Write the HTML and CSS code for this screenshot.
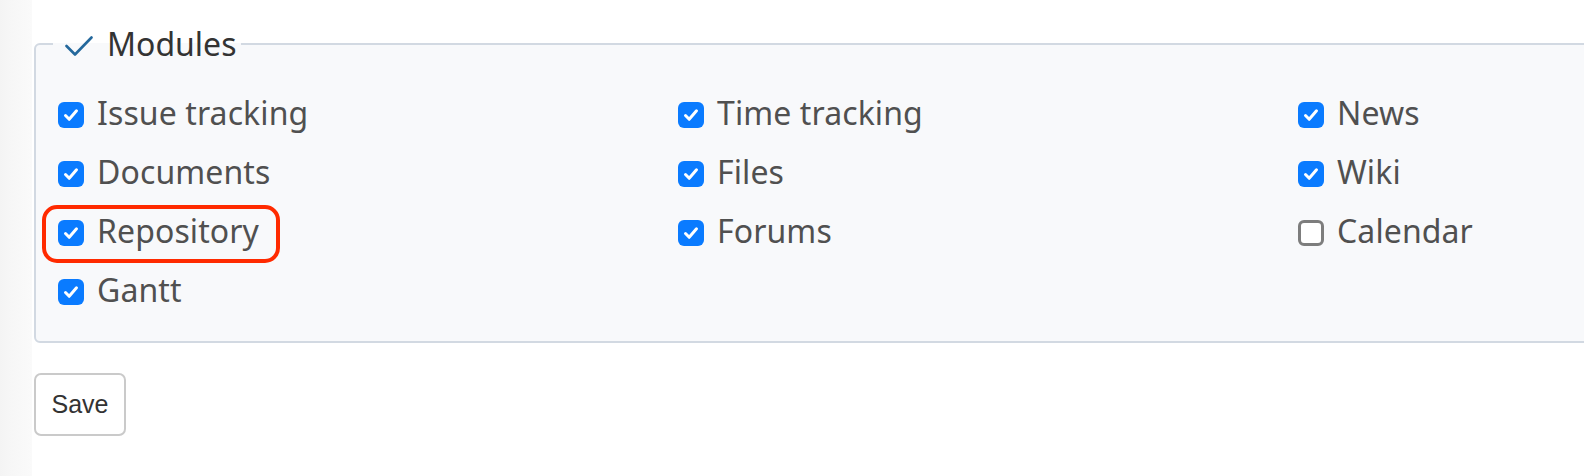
FILE: index.html
```html
<!DOCTYPE html>
<html>
<head>
<meta charset="utf-8">
<link rel="stylesheet" href="styles.css">
</head>
<body>
<div class="page">
  <div class="sidebar"></div>
  <div class="content">
    <fieldset class="modules">
      <legend class="legend">
        <svg class="legend-icon" width="28" height="20" viewBox="0 0 28 20"><polyline points="1.5,10 10,18.5 26.5,1.5" fill="none" stroke="#24689c" stroke-width="2.6" stroke-linecap="round" stroke-linejoin="round"/></svg>
        <span>Modules</span>
      </legend>
      <div class="grid">
        <label class="item"><span class="cb on"><svg width="26" height="26" viewBox="0 0 26 26"><polyline points="7.5,13.5 11.2,17.3 18.5,8.8" fill="none" stroke="#fff" stroke-width="3" stroke-linecap="round" stroke-linejoin="round"/></svg></span>Issue tracking</label>
        <label class="item"><span class="cb on"><svg width="26" height="26" viewBox="0 0 26 26"><polyline points="7.5,13.5 11.2,17.3 18.5,8.8" fill="none" stroke="#fff" stroke-width="3" stroke-linecap="round" stroke-linejoin="round"/></svg></span>Time tracking</label>
        <label class="item"><span class="cb on"><svg width="26" height="26" viewBox="0 0 26 26"><polyline points="7.5,13.5 11.2,17.3 18.5,8.8" fill="none" stroke="#fff" stroke-width="3" stroke-linecap="round" stroke-linejoin="round"/></svg></span>News</label>
        <label class="item"><span class="cb on"><svg width="26" height="26" viewBox="0 0 26 26"><polyline points="7.5,13.5 11.2,17.3 18.5,8.8" fill="none" stroke="#fff" stroke-width="3" stroke-linecap="round" stroke-linejoin="round"/></svg></span>Documents</label>
        <label class="item"><span class="cb on"><svg width="26" height="26" viewBox="0 0 26 26"><polyline points="7.5,13.5 11.2,17.3 18.5,8.8" fill="none" stroke="#fff" stroke-width="3" stroke-linecap="round" stroke-linejoin="round"/></svg></span>Files</label>
        <label class="item"><span class="cb on"><svg width="26" height="26" viewBox="0 0 26 26"><polyline points="7.5,13.5 11.2,17.3 18.5,8.8" fill="none" stroke="#fff" stroke-width="3" stroke-linecap="round" stroke-linejoin="round"/></svg></span>Wiki</label>
        <label class="item highlighted"><span class="cb on"><svg width="26" height="26" viewBox="0 0 26 26"><polyline points="7.5,13.5 11.2,17.3 18.5,8.8" fill="none" stroke="#fff" stroke-width="3" stroke-linecap="round" stroke-linejoin="round"/></svg></span>Repository<span class="ring"></span></label>
        <label class="item"><span class="cb on"><svg width="26" height="26" viewBox="0 0 26 26"><polyline points="7.5,13.5 11.2,17.3 18.5,8.8" fill="none" stroke="#fff" stroke-width="3" stroke-linecap="round" stroke-linejoin="round"/></svg></span>Forums</label>
        <label class="item"><span class="cb off"></span>Calendar</label>
        <label class="item"><span class="cb on"><svg width="26" height="26" viewBox="0 0 26 26"><polyline points="7.5,13.5 11.2,17.3 18.5,8.8" fill="none" stroke="#fff" stroke-width="3" stroke-linecap="round" stroke-linejoin="round"/></svg></span>Gantt</label>
      </div>
    </fieldset>
    <button class="save">Save</button>
  </div>
</div>
</body>
</html>
```

FILE: styles.css
```css
html, body {
  margin: 0;
  padding: 0;
  background: #fff;
  overflow: hidden;
}
.page {
  display: flex;
  width: 1584px;
  height: 476px;
}
.sidebar {
  width: 32px;
  flex: none;
  background: linear-gradient(to right, #f4f4f4, #f7f7f7 40%, #fafafa);
}
.content {
  flex: 1;
  padding: 25px 0 0 2px;
  min-width: 0;
}
.modules {
  width: 1600px;
  margin: 0;
  padding: 20px 0 22px 22px;
  border: 2px solid #d2d9e2;
  border-radius: 6px;
  background: #f8f9fb;
  box-sizing: border-box;
  font-family: "Noto Sans", sans-serif;
}
.legend {
  margin-left: -5px;
  padding: 0 5px 0 12px;
  display: flex;
  align-items: center;
  gap: 14px;
  font-size: 32px;
  line-height: 38px;
  color: #333;
}
.legend-icon {
  display: block;
  margin-top: 4px;
}
.grid {
  display: grid;
  grid-template-columns: 620px 620px 620px;
  grid-auto-rows: 59px;
}
.item {
  position: relative;
  display: flex;
  align-items: center;
  font-size: 32px;
  letter-spacing: 0.1px;
  line-height: 59px;
  color: #505050;
}
.cb {
  flex: none;
  width: 26px;
  height: 26px;
  margin: 4px 13px 0 0;
  border-radius: 6px;
  box-sizing: border-box;
}
.cb svg {
  display: block;
}
.cb.on {
  background: #0a7bff;
}
.cb.off {
  background: #fff;
  border: 3px solid #7d7d7d;
}
.ring {
  position: absolute;
  left: -16px;
  top: 4px;
  width: 238px;
  height: 58px;
  border: 4px solid #ff2a00;
  border-radius: 15px;
  box-sizing: border-box;
}
.save {
  display: block;
  margin-top: 30px;
  width: 92px;
  height: 63px;
  padding: 0;
  border: 2px solid #cacaca;
  border-radius: 7px;
  background: #fff;
  font-family: "Liberation Sans", Arial, sans-serif;
  font-size: 25px;
  color: #333;
}
```
